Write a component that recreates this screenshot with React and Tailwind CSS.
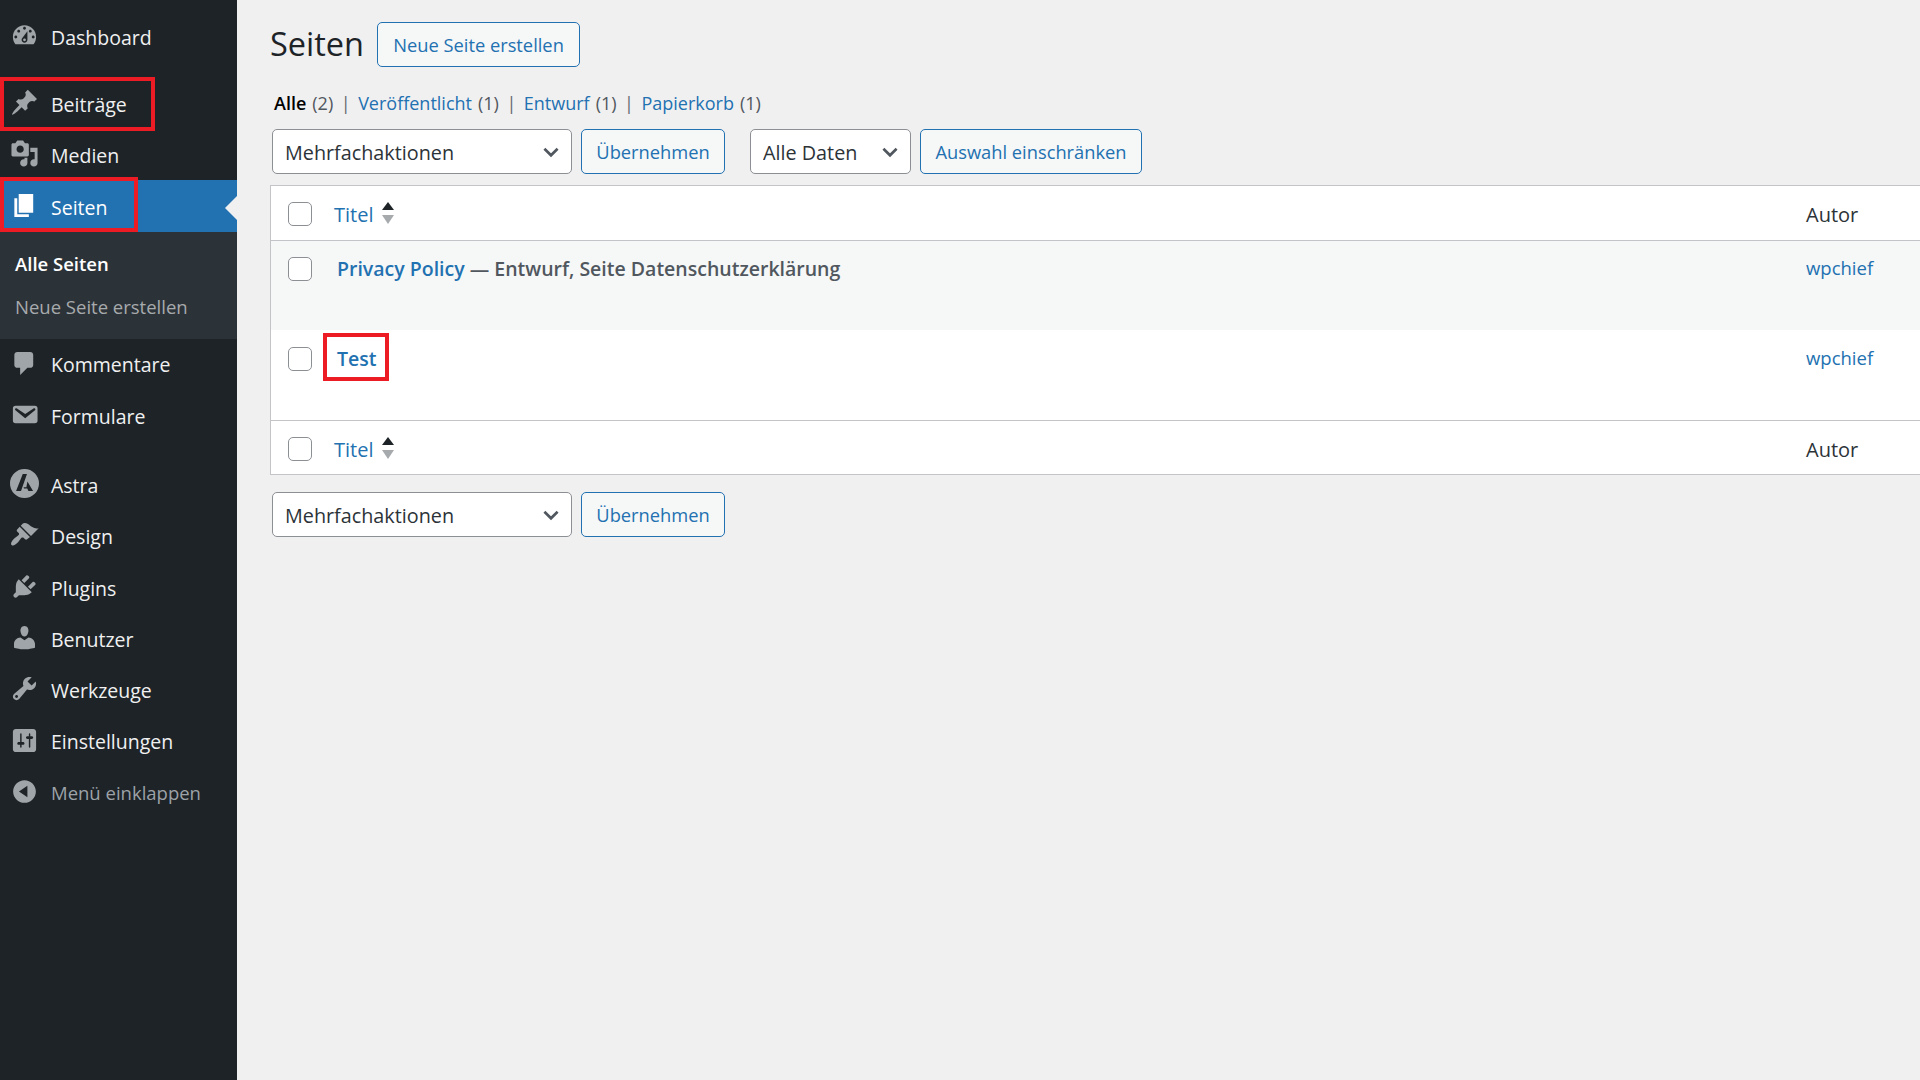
const font = { fontFamily: '"Open Sans", "Noto Sans", sans-serif' };

const icons = {
    dashboard: 'M3.76 16h12.48c1.1-1.37 1.76-3.11 1.76-5 0-4.42-3.58-8-8-8s-8 3.58-8 8c0 1.89.66 3.63 1.76 5zM10 4c.55 0 1 .45 1 1s-.45 1-1 1-1-.45-1-1 .45-1 1-1zM6 6c.55 0 1 .45 1 1s-.45 1-1 1-1-.45-1-1 .45-1 1-1zm8 0c.55 0 1 .45 1 1s-.45 1-1 1-1-.45-1-1 .45-1 1-1zm-5.37 5.55L12 7v6c0 1.1-.9 2-2 2s-2-.9-2-2c0-.57.24-1.08.63-1.45zM4 10c.55 0 1 .45 1 1s-.45 1-1 1-1-.45-1-1 .45-1 1-1zm12 0c.55 0 1 .45 1 1s-.45 1-1 1-1-.45-1-1 .45-1 1-1zm-5 3c0-.55-.45-1-1-1s-1 .45-1 1 .45 1 1 1 1-.45 1-1z',
    post: 'M10.44 3.02l1.82-1.82 6.36 6.35-1.83 1.82c-1.05-.68-2.48-.57-3.41.36l-.75.75c-.92.93-1.04 2.35-.35 3.41l-1.83 1.82-2.41-2.41-2.8 2.79c-.42.42-3.38 2.71-3.8 2.29s1.86-3.39 2.28-3.81l2.79-2.79L4.1 9.36l1.83-1.82c1.05.69 2.48.57 3.4-.36l.75-.75c.93-.92 1.05-2.35.36-3.41z',
    media: 'M13 11V4c0-.55-.45-1-1-1h-1.67L9 1H5L3.67 3H2c-.55 0-1 .45-1 1v7c0 .55.45 1 1 1h10c.55 0 1-.45 1-1zM7 4.5c1.38 0 2.5 1.12 2.5 2.5S8.38 9.5 7 9.5 4.5 8.38 4.5 7 5.62 4.5 7 4.5zM14 6h5v10.5c0 1.38-1.12 2.5-2.5 2.5S14 17.88 14 16.5s1.12-2.5 2.5-2.5c.17 0 .34.02.5.05V9h-3V6zm-4 8.05V13h2v3.5c0 1.38-1.12 2.5-2.5 2.5S7 17.88 7 16.5 8.12 14 9.5 14c.17 0 .34.02.5.05z',
    page: 'M6 15V2h10v13H6zm-1 1h8v2H3V5h2v11z',
    comments: 'M5 2h9c1.1 0 2 .9 2 2v7c0 1.1-.9 2-2 2h-2l-5 5v-5H5c-1.1 0-2-.9-2-2V4c0-1.1.9-2 2-2z',
    email: 'M3.87 4h13.25C18.37 4 19 4.59 19 5.79v8.42c0 1.19-.63 1.79-1.88 1.79H3.87c-1.25 0-1.88-.6-1.88-1.79V5.79c0-1.2.63-1.79 1.88-1.79zm6.62 8.6l6.74-5.53c.24-.2.43-.66.13-1.07-.29-.41-.82-.42-1.17-.17l-5.7 3.86L4.8 5.83c-.35-.25-.88-.24-1.17.17-.3.41-.11.87.13 1.07z',
    appearance: 'M14.48 11.06L7.41 3.99l1.5-1.5c.5-.56 2.3-.47 3.51.32 1.21.8 1.43 1.28 2.91 2.1 1.18.64 2.45 1.26 4.45.85zm-.71.71L6.7 4.7 4.93 6.47c-.39.39-.39 1.02 0 1.41l1.06 1.06c.39.39.39 1.03 0 1.42-.6.6-1.43 1.11-2.21 1.69-.35.26-.7.53-1 .84-1.36 1.35-2.69 3.3-1.7 4.3 1 .99 2.95-.34 4.3-1.7.3-.3.57-.65.83-1 .58-.78 1.1-1.6 1.7-2.2.39-.39 1.02-.39 1.41 0l1.06 1.06c.39.39 1.02.39 1.41 0z',
    plugins: 'M13.11 4.36L9.87 7.6 8 5.73l3.24-3.24c.35-.34 1.05-.2 1.56.32.52.51.66 1.21.31 1.55zm-8 1.77l.91-1.12 9.01 9.01-1.19.84c-.71.71-2.63 1.16-3.82 1.16H6.14L4.9 17.26c-.59.59-1.54.59-2.12 0-.59-.58-.59-1.53 0-2.12l1.24-1.24v-3.88c0-1.13.4-3.19 1.09-3.89zm7.26 3.97l3.24-3.24c.34-.35 1.04-.21 1.55.31.52.51.66 1.21.31 1.55l-3.24 3.25z',
    users: 'M10 9.25c-2.27 0-2.73-3.44-2.73-3.44C7 4.02 7.82 2 9.97 2c2.16 0 2.98 2.02 2.71 3.81 0 0-.41 3.44-2.68 3.44zm0 2.57L12.72 10c2.39 0 4.52 2.33 4.52 4.53v2.49s-3.65 1.13-7.24 1.13c-3.65 0-7.24-1.13-7.24-1.13v-2.49c0-2.25 1.94-4.48 4.47-4.48z',
    tools: 'M16.68 9.77c-1.34 1.34-3.3 1.67-4.95.99l-5.41 6.52c-.99.99-2.59.99-3.58 0s-.99-2.59 0-3.57l6.52-5.42c-.68-1.65-.35-3.61.99-4.95 1.28-1.28 3.12-1.62 4.72-1.06l-2.89 2.89 2.82 2.82 2.86-2.87c.53 1.58.18 3.39-1.08 4.65zM3.81 16.21c.4.39 1.04.39 1.43 0 .4-.4.4-1.04 0-1.43-.39-.4-1.03-.4-1.43 0-.39.39-.39 1.03 0 1.43z',
    settings: 'M18 16V4c0-1.1-.9-2-2-2H4c-1.1 0-2 .9-2 2v12c0 1.1.9 2 2 2h12c1.1 0 2-.9 2-2zM8 11h1c.55 0 1 .45 1 1s-.45 1-1 1H8v1.5c0 .28-.22.5-.5.5s-.5-.22-.5-.5V13H6c-.55 0-1-.45-1-1s.45-1 1-1h1V5.5c0-.28.22-.5.5-.5s.5.22.5.5V11zm5-2h-1c-.55 0-1-.45-1-1s.45-1 1-1h1V5.5c0-.28.22-.5.5-.5s.5.22.5.5V7h1c.55 0 1 .45 1 1s-.45 1-1 1h-1v5.5c0 .28-.22.5-.5.5s-.5-.22-.5-.5V9z',
    collapse: 'M10 2.16c4.33 0 7.84 3.51 7.84 7.84s-3.51 7.84-7.84 7.84S2.16 14.33 2.16 10 5.71 2.16 10 2.16zm2 11.72V6.12L6.18 9.97z',
    astra: 'M10 0a10 10 0 1 0 0 20 10 10 0 0 0 0-20zM8.8 3.4h2.9L7.6 15.2H4.2zM12 8.6l3.9 6.6h-3.2l-.8-1.7H9.7l-.3-.9h1.9z',
};

function MenuIcon({ name, className = 'fill-[#a0a5aa]' }) {
    return (
        <svg viewBox="0 0 20 20" className={`w-[29px] h-[29px] shrink-0 mt-[-3px] ${className}`}>
            <path d={icons[name]} fillRule="evenodd" />
        </svg>
    );
}

function MenuItem({ icon, label, className = '', children }) {
    return (
        <div className={`relative flex items-center h-[51.3px] pl-[10px] ${className}`}>
            <MenuIcon name={icon} />
            <span className="ml-[12px] mt-[1px] text-[19.5px] text-[#f0f0f1]">{label}</span>
            {children}
        </div>
    );
}

function Sidebar() {
    return (
        <aside className="w-[237px] shrink-0 bg-[#1d2327] pt-[11px]">
            <MenuItem icon="dashboard" label="Dashboard" />
            <MenuItem icon="post" label="Beiträge" className="mt-[16px]">
                <div className="absolute left-0 top-[-1px] w-[155px] h-[54px] border-[4px] border-[#ed1c24]" />
            </MenuItem>
            <MenuItem icon="media" label="Medien" />

            {/* Seiten, aktiv */}
            <div className="relative mt-[-1px] flex items-center h-[52px] pl-[10px] pt-[2px] bg-[#2271b1]">
                <MenuIcon name="page" className="fill-white" />
                <span className="ml-[12px] mt-[1px] text-[19.5px] text-white">Seiten</span>
                <div className="absolute left-0 top-[-3px] w-[138px] h-[55px] border-[4px] border-[#ed1c24]" />
                <div className="absolute right-0 top-[16px] border-y-[12px] border-y-transparent border-r-[12px] border-r-[#f0f0f1]" />
            </div>
            <div className="h-[107px] bg-[#2c3338] pl-[15px] pt-[16px] text-[18.5px]">
                <div className="h-[31px] leading-[31px] font-semibold text-white">Alle Seiten</div>
                <div className="mt-[12px] h-[31px] leading-[31px] text-[#a7aaad]">Neue Seite erstellen</div>
            </div>

            <MenuItem icon="comments" label="Kommentare" />
            <MenuItem icon="email" label="Formulare" />
            <MenuItem icon="astra" label="Astra" className="mt-[18px]" />
            <MenuItem icon="appearance" label="Design" />
            <MenuItem icon="plugins" label="Plugins" />
            <MenuItem icon="users" label="Benutzer" />
            <MenuItem icon="tools" label="Werkzeuge" />
            <MenuItem icon="settings" label="Einstellungen" />
            <div className="flex items-center h-[51.3px] pl-[10px]">
                <MenuIcon name="collapse" />
                <span className="ml-[12px] text-[18.5px] text-[#9ca2a7]">Menü einklappen</span>
            </div>
        </aside>
    );
}

function OutlineButton({ children, className = '' }) {
    return (
        <button className={`h-[45px] rounded-[5px] border border-[#2271b1] bg-[#f6f7f7] text-[18.3px] text-[#2271b1] ${className}`}>
            {children}
        </button>
    );
}

function Dropdown({ label, className = '' }) {
    return (
        <div className={`relative h-[45px] ${className}`}>
            <select className="w-full h-full appearance-none rounded-[5px] border border-[#8c8f94] bg-white pl-[12px] pt-[2px] text-[19.8px] text-[#2c3338]">
                <option>{label}</option>
            </select>
            <svg viewBox="0 0 20 20" className="absolute right-[10px] top-[12px] w-[22px] h-[22px] fill-none stroke-[#50575e] stroke-[2.4]">
                <path d="M4 7l6 6 6-6" />
            </svg>
        </div>
    );
}

function Checkbox() {
    return <input type="checkbox" className="w-[24px] h-[24px] shrink-0 appearance-none rounded-[5px] border border-[#8c8f94] bg-white" />;
}

function SortArrows() {
    return (
        <svg viewBox="0 0 12 22" className="ml-[9px] w-[12px] h-[22px]">
            <path d="M6 0l6 8H0z" className="fill-[#1d2327]" />
            <path d="M6 22l6-9H0z" className="fill-[#a7aaad]" />
        </svg>
    );
}

function HeadRow({ className = '' }) {
    return (
        <div className={`flex items-center bg-white pl-[17px] pt-[2px] ${className}`}>
            <Checkbox />
            <a className="ml-[22px] mt-[2px] text-[20px] text-[#2271b1]">Titel</a>
            <div className="mb-[2px]"><SortArrows /></div>
            <span className="ml-auto mt-[2px] w-[114px] text-[20px] text-[#2c3338]">Autor</span>
        </div>
    );
}

function PageRow({ children, className = '' }) {
    return (
        <div className={`flex items-start pl-[17px] ${className}`}>
            <Checkbox />
            <div className="relative ml-[25px] mt-[-1px] text-[19.5px] leading-[26px] font-semibold text-[#50575e] whitespace-nowrap">{children}</div>
            <a className="ml-auto mt-[-1px] w-[114px] text-[18.5px] leading-[24px] text-[#2271b1]">wpchief</a>
        </div>
    );
}

export default function App() {
    return (
        <div className="flex h-screen overflow-hidden bg-[#f0f0f1]" style={font}>
            <Sidebar />
            <main className="flex-1 min-w-0 pl-[33px] pt-[22px]">
                <div className="flex items-center h-[45px]">
                    <h1 className="text-[32.5px] text-[#1d2327]">Seiten</h1>
                    <OutlineButton className="ml-[13px] w-[203px]">Neue Seite erstellen</OutlineButton>
                </div>

                <div className="mt-[23px] ml-[4px] h-[26px] flex items-center text-[18px] text-[#50575e]">
                    <b className="font-semibold text-black">Alle</b>
                    <span className="ml-[6px]">(2)</span>
                    <span className="mx-[7.5px] text-[#646970]">|</span>
                    <a className="text-[#2271b1]">Veröffentlicht</a>
                    <span className="ml-[6px]">(1)</span>
                    <span className="mx-[7.5px] text-[#646970]">|</span>
                    <a className="text-[#2271b1]">Entwurf</a>
                    <span className="ml-[6px]">(1)</span>
                    <span className="mx-[7.5px] text-[#646970]">|</span>
                    <a className="text-[#2271b1]">Papierkorb</a>
                    <span className="ml-[6px]">(1)</span>
                </div>

                <div className="mt-[13px] ml-[2px] flex">
                    <Dropdown label="Mehrfachaktionen" className="w-[300px]" />
                    <OutlineButton className="ml-[9px] w-[144px]">Übernehmen</OutlineButton>
                    <Dropdown label="Alle Daten" className="ml-[25px] w-[161px]" />
                    <OutlineButton className="ml-[9px] w-[222px]">Auswahl einschränken</OutlineButton>
                </div>

                <div className="mt-[11px] border-y border-l border-[#c3c4c7]">
                    <HeadRow className="border-b border-[#c3c4c7] h-[55px]" />
                    <PageRow className="bg-[#f6f7f7] h-[89px] pt-[16px]">
                        <a className="text-[#2271b1]">Privacy Policy</a> — Entwurf, Seite Datenschutzerklärung
                    </PageRow>
                    <PageRow className="bg-white h-[90px] pt-[17px]">
                        <a className="text-[#2271b1]">Test</a>
                        <div className="absolute left-[-14px] top-[-13px] w-[66px] h-[48px] border-[4px] border-[#ed1c24]" />
                    </PageRow>
                    <HeadRow className="border-t border-[#c3c4c7] h-[54px]" />
                </div>

                <div className="mt-[17px] ml-[2px] flex">
                    <Dropdown label="Mehrfachaktionen" className="w-[300px]" />
                    <OutlineButton className="ml-[9px] w-[144px]">Übernehmen</OutlineButton>
                </div>
            </main>
        </div>
    );
}
